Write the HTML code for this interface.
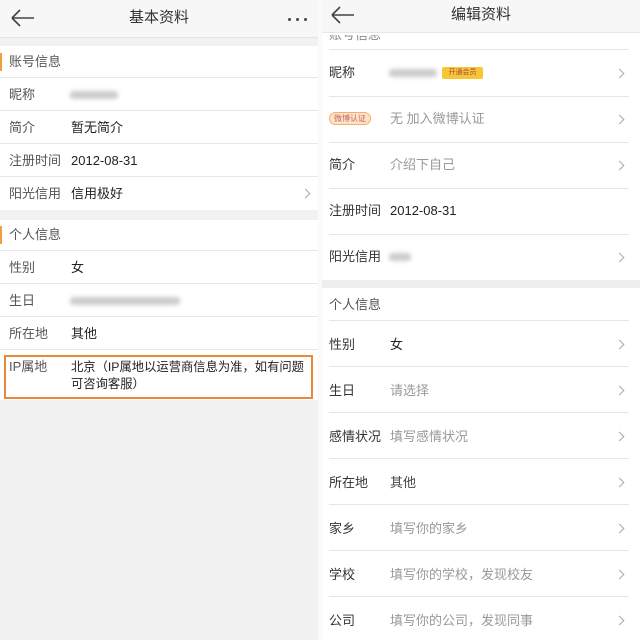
<!DOCTYPE html><html><head><meta charset="utf-8"><style>
*{margin:0;padding:0;box-sizing:border-box}
body{width:640px;height:640px;overflow:hidden;background:#fff;font-family:"Liberation Sans","Noto Sans CJK SC",sans-serif;position:relative}
.a{position:absolute;white-space:nowrap;line-height:16px}
.l{font-size:13px;color:#333}
.v{font-size:13px;color:#222}
.g{color:#999}
.ln{position:absolute;height:1px;background:#e6e6e6}
.chev{position:absolute;width:7px;height:7px;border-right:1.3px solid #aaa;border-top:1.3px solid #aaa;transform:rotate(45deg)}
.blur{position:absolute;height:8px;background:#ccc;filter:blur(2px);border-radius:3px}
.dot{position:absolute;width:3px;height:3px;border-radius:50%;background:#444}
</style></head><body>
<!-- LEFT -->
<div class="a" style="left:0;top:0;width:318px;height:640px;background:#f1f1f1"></div>
<div class="a" style="left:0;top:0;width:318px;height:38px;background:#f7f7f7;border-bottom:1px solid #e3e3e3"></div>
<svg class="a" style="left:10px;top:8px" width="26" height="20"><path d="M2 10H24M2 10L10 2M2 10L10 18" stroke="#444" stroke-width="1.6" fill="none"/></svg>
<div class="a" style="left:0;width:318px;top:10px;text-align:center;font-size:15px;color:#333">基本资料</div>
<div class="dot" style="left:288px;top:18px"></div><div class="dot" style="left:296px;top:18px"></div><div class="dot" style="left:304px;top:18px"></div>
<div class="a" style="left:0;top:46px;width:318px;height:164px;background:#fff"></div>
<div class="a" style="left:0;top:53px;width:2px;height:18px;background:#f0a040"></div>
<div class="a l" style="left:9px;top:54px;color:#555">账号信息</div>
<div class="ln" style="left:0;top:77px;width:318px"></div>
<div class="a l" style="left:9px;top:87px;color:#555">昵称</div><div class="blur" style="left:70px;top:91px;width:48px"></div>
<div class="ln" style="left:0;top:110px;width:318px"></div>
<div class="a l" style="left:9px;top:120px;color:#555">简介</div><div class="a v" style="left:71px;top:120px">暂无简介</div>
<div class="ln" style="left:0;top:143px;width:318px"></div>
<div class="a l" style="left:9px;top:153px;color:#555">注册时间</div><div class="a v" style="left:71px;top:153px">2012-08-31</div>
<div class="ln" style="left:0;top:176px;width:318px"></div>
<div class="a l" style="left:9px;top:186px;color:#555">阳光信用</div><div class="a v" style="left:71px;top:186px">信用极好</div>
<div class="chev" style="left:302px;top:190px"></div>
<div class="a" style="left:0;top:220px;width:318px;height:180px;background:#fff"></div>
<div class="a" style="left:0;top:226px;width:2px;height:18px;background:#f0a040"></div>
<div class="a l" style="left:9px;top:227px;color:#555">个人信息</div>
<div class="ln" style="left:0;top:250px;width:318px"></div>
<div class="a l" style="left:9px;top:260px;color:#555">性别</div><div class="a v" style="left:71px;top:260px">女</div>
<div class="ln" style="left:0;top:283px;width:318px"></div>
<div class="a l" style="left:9px;top:293px;color:#555">生日</div><div class="blur" style="left:70px;top:297px;width:110px"></div>
<div class="ln" style="left:0;top:316px;width:318px"></div>
<div class="a l" style="left:9px;top:326px;color:#555">所在地</div><div class="a v" style="left:71px;top:326px">其他</div>
<div class="ln" style="left:0;top:349px;width:318px"></div>
<div class="a" style="left:4px;top:355px;width:309px;height:44px;border:2px solid #e8893a"></div>
<div class="a l" style="left:9px;top:359px;color:#555">IP属地</div>
<div class="a v" style="left:71px;top:359px;line-height:17px;font-size:12.3px">北京（IP属地以运营商信息为准，如有问题<br>可咨询客服）</div>
<!-- RIGHT -->
<div class="a" style="left:318px;top:0;width:4px;height:640px;background:#fafafa"></div>
<div class="a" style="left:322px;top:0;width:318px;height:33px;background:#f7f7f7;border-bottom:1px solid #e6e6e6"></div>
<svg class="a" style="left:330px;top:5px" width="26" height="20"><path d="M2 10H24M2 10L10 2M2 10L10 18" stroke="#444" stroke-width="1.6" fill="none"/></svg>
<div class="a" style="left:322px;width:318px;top:7px;text-align:center;font-size:15px;color:#333">编辑资料</div>
<div class="a l" style="left:329px;top:27px;color:#888;clip-path:inset(8px 0 0 0)">账号信息</div>
<div class="ln" style="left:329px;top:49px;width:300px"></div>
<div class="a l" style="left:329px;top:65px">昵称</div><div class="blur" style="left:389px;top:69px;width:48px"></div>
<div class="a" style="left:442px;top:67px;width:41px;height:12px;background:#f7c634;border-radius:2px;font-size:7px;color:#a45;line-height:12px;text-align:center">开通会员</div>
<div class="chev" style="left:616px;top:70px"></div>
<div class="ln" style="left:329px;top:96px;width:300px"></div>
<div class="a" style="left:329px;top:112px;width:42px;height:13px;background:#fde4c4;border:1px solid #f0b070;border-radius:7px;font-size:8px;color:#c66;line-height:11px;text-align:center">微博认证</div>
<div class="a l g" style="left:390px;top:111px">无 加入微博认证</div>
<div class="chev" style="left:616px;top:116px"></div>
<div class="ln" style="left:329px;top:142px;width:300px"></div>
<div class="a l" style="left:329px;top:157px">简介</div><div class="a l g" style="left:390px;top:157px">介绍下自己</div>
<div class="chev" style="left:616px;top:162px"></div>
<div class="ln" style="left:329px;top:188px;width:300px"></div>
<div class="a l" style="left:329px;top:203px">注册时间</div><div class="a v" style="left:390px;top:203px">2012-08-31</div>
<div class="ln" style="left:329px;top:234px;width:300px"></div>
<div class="a l" style="left:329px;top:249px">阳光信用</div><div class="blur" style="left:389px;top:253px;width:22px"></div>
<div class="chev" style="left:616px;top:254px"></div>
<div class="a" style="left:322px;top:280px;width:318px;height:8px;background:#eee"></div>
<div class="a l" style="left:329px;top:297px;color:#555">个人信息</div>
<div class="ln" style="left:329px;top:320px;width:300px"></div>
<div class="a l" style="left:329px;top:337px">性别</div><div class="a v" style="left:390px;top:337px">女</div><div class="chev" style="left:616px;top:341px"></div>
<div class="ln" style="left:329px;top:366px;width:300px"></div>
<div class="a l" style="left:329px;top:383px">生日</div><div class="a l g" style="left:390px;top:383px">请选择</div><div class="chev" style="left:616px;top:387px"></div>
<div class="ln" style="left:329px;top:412px;width:300px"></div>
<div class="a l" style="left:329px;top:429px">感情状况</div><div class="a l g" style="left:390px;top:429px">填写感情状况</div><div class="chev" style="left:616px;top:433px"></div>
<div class="ln" style="left:329px;top:458px;width:300px"></div>
<div class="a l" style="left:329px;top:475px">所在地</div><div class="a v" style="left:390px;top:475px;color:#444">其他</div><div class="chev" style="left:616px;top:479px"></div>
<div class="ln" style="left:329px;top:504px;width:300px"></div>
<div class="a l" style="left:329px;top:521px">家乡</div><div class="a l g" style="left:390px;top:521px">填写你的家乡</div><div class="chev" style="left:616px;top:525px"></div>
<div class="ln" style="left:329px;top:550px;width:300px"></div>
<div class="a l" style="left:329px;top:567px">学校</div><div class="a l g" style="left:390px;top:567px">填写你的学校，发现校友</div><div class="chev" style="left:616px;top:571px"></div>
<div class="ln" style="left:329px;top:596px;width:300px"></div>
<div class="a l" style="left:329px;top:613px">公司</div><div class="a l g" style="left:390px;top:613px">填写你的公司，发现同事</div><div class="chev" style="left:616px;top:617px"></div>
</body></html>
